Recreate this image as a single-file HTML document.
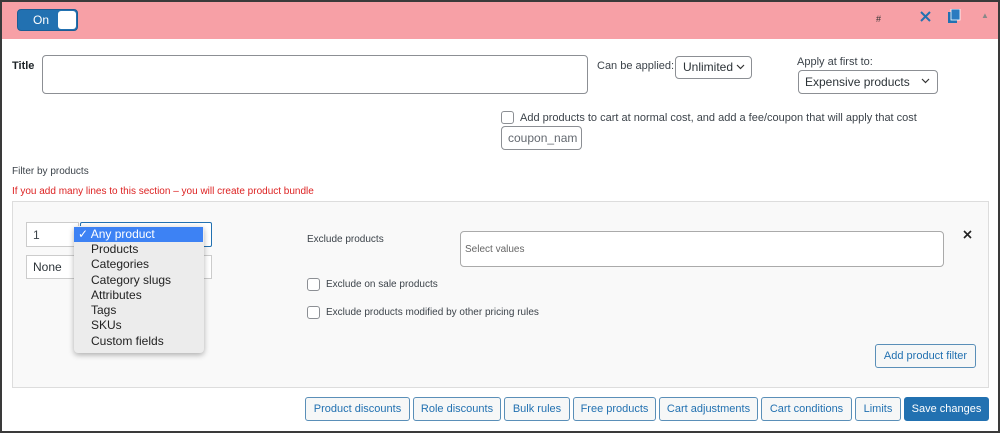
<!DOCTYPE html><html><head><style>
*{box-sizing:border-box;margin:0;padding:0}
body{width:1000px;height:433px;background:#fff;font-family:"Liberation Sans",sans-serif;position:relative;overflow:hidden;color:#3c434a}
.a{position:absolute}
.frame{left:0;top:0;width:1000px;height:433px;border:2px solid #3a3a3a}
.hdr{left:2px;top:2px;width:996px;height:37px;background:#f7a0a6}
.in{position:absolute;background:#fff;border:1px solid #8c8f94;border-radius:4px}
.t{position:absolute;white-space:nowrap}
.btn{position:absolute;top:397px;height:24px;border:1px solid #5a8fb8;border-radius:3px;background:#f6f7f7;color:#2271b1;font-size:11px;text-align:center;line-height:22px}
.cb{position:absolute;width:13px;height:13px;border:1px solid #8c8f94;border-radius:3px;background:#fff}
</style></head><body>
<div class="a hdr"></div>
<div class="a" style="left:17px;top:9px;width:61px;height:22px;background:#2271b1;border-radius:4px;border:1px solid #1a5d94"></div>
<div class="t" style="left:33px;top:13px;color:#fff;font-size:12px">On</div>
<div class="a" style="left:58px;top:11px;width:18px;height:18px;background:#fff;border-radius:3px"></div>
<div class="t" style="left:876px;top:14px;font-size:9px;color:#333">#</div>
<svg class="a" style="left:920px;top:11px" width="11" height="11"><path d="M1 1L10 10M10 1L1 10" stroke="#2271b1" stroke-width="2"/></svg>
<svg class="a" style="left:947px;top:9px" width="14" height="15"><rect x="1" y="3" width="9" height="11" fill="#2271b1"/><rect x="4" y="0" width="9" height="11" fill="#2a7bc0" stroke="#fff" stroke-width="0.8"/></svg>
<div class="t" style="left:981px;top:11px;font-size:8px;color:#888">▲</div>
<div class="t" style="left:12px;top:60px;font-size:11px;font-weight:bold;color:#1d2327">Title</div>
<div class="in" style="left:42px;top:55px;width:546px;height:39px"></div>
<div class="t" style="left:597px;top:60px;font-size:11px">Can be applied:</div>
<div class="in" style="left:675px;top:56px;width:77px;height:23px"></div>
<div class="t" style="left:683px;top:60px;font-size:12px;color:#2c3338">Unlimited</div>
<svg class="a" style="left:736px;top:64px" width="9" height="6"><path d="M1 1L4.5 4.5L8 1" stroke="#333" fill="none" stroke-width="1.2"/></svg>
<div class="t" style="left:797px;top:56px;font-size:11px">Apply at first to:</div>
<div class="in" style="left:798px;top:70px;width:140px;height:24px"></div>
<div class="t" style="left:805px;top:75px;font-size:12px;color:#2c3338">Expensive products</div>
<svg class="a" style="left:921px;top:78px" width="9" height="6"><path d="M1 1L4.5 4.5L8 1" stroke="#333" fill="none" stroke-width="1.2"/></svg>
<div class="cb" style="left:501px;top:111px"></div>
<div class="t" style="left:520px;top:112px;font-size:11px">Add products to cart at normal cost, and add a fee/coupon that will apply that cost</div>
<div class="in" style="left:501px;top:126px;width:81px;height:24px"></div>
<div class="t" style="left:508px;top:131px;font-size:12px;color:#646970">coupon_nam</div>
<div class="t" style="left:12px;top:166px;font-size:10px">Filter by products</div>
<div class="t" style="left:12px;top:186px;font-size:10px;color:#d22">If you add many lines to this section – you will create product bundle</div>
<div class="a" style="left:12px;top:201px;width:977px;height:187px;background:#f9f9f9;border:1px solid #ddd"></div>
<div class="in" style="left:26px;top:222px;width:53px;height:25px;border-radius:0;border-color:#ccc"></div>
<div class="t" style="left:33px;top:228px;font-size:12px">1</div>
<div class="in" style="left:80px;top:222px;width:132px;height:25px;border-radius:2px;border-color:#2271b1"></div>
<div class="in" style="left:26px;top:255px;width:186px;height:24px;border-radius:0;border-color:#ccc"></div>
<div class="t" style="left:33px;top:260px;font-size:12px;color:#2c3338">None</div>
<div class="a" style="left:74px;top:226px;width:130px;height:127px;background:#ececec;border-radius:4px;box-shadow:0 2px 6px rgba(0,0,0,.3)"></div>
<div class="a" style="left:74px;top:227px;width:129px;height:15px;background:#3d82f4"></div>
<div class="t" style="left:78px;top:227px;font-size:12px;color:#fff;line-height:15px">✓ Any product</div>
<div class="t" style="left:91px;top:242px;font-size:12px;color:#222;line-height:15.3px">Products<br>Categories<br>Category slugs<br>Attributes<br>Tags<br>SKUs<br>Custom fields</div>
<div class="t" style="left:307px;top:234px;font-size:10px">Exclude products</div>
<div class="in" style="left:460px;top:231px;width:484px;height:36px;border-color:#aaa"></div>
<div class="t" style="left:465px;top:244px;font-size:10px;color:#666">Select values</div>
<svg class="a" style="left:963px;top:230px" width="9" height="9"><path d="M1 1L8 8M8 1L1 8" stroke="#222" stroke-width="1.6"/></svg>
<div class="cb" style="left:307px;top:278px"></div>
<div class="t" style="left:326px;top:279px;font-size:10px">Exclude on sale products</div>
<div class="cb" style="left:307px;top:306px"></div>
<div class="t" style="left:326px;top:307px;font-size:10px">Exclude products modified by other pricing rules</div>
<div class="btn" style="left:875px;top:344px;width:101px">Add product filter</div>
<div class="btn" style="left:305px;width:105px">Product discounts</div>
<div class="btn" style="left:413px;width:88px">Role discounts</div>
<div class="btn" style="left:504px;width:66px">Bulk rules</div>
<div class="btn" style="left:573px;width:83px">Free products</div>
<div class="btn" style="left:659px;width:99px">Cart adjustments</div>
<div class="btn" style="left:761px;width:91px">Cart conditions</div>
<div class="btn" style="left:855px;width:46px">Limits</div>
<div class="btn" style="left:904px;width:85px;background:#2271b1;color:#fff;border-color:#2271b1">Save changes</div>
<div class="a frame"></div>
</body></html>
